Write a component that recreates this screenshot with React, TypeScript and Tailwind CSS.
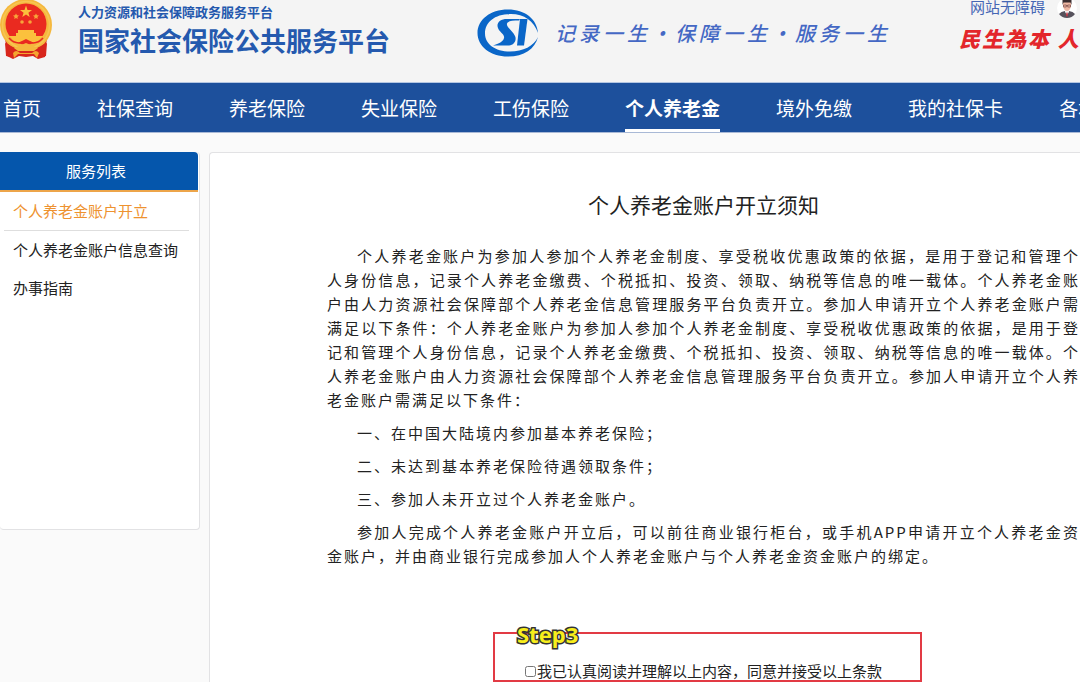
import { useState } from "react"

const navItems = ["首页", "社保查询", "养老保险", "失业保险", "工伤保险", "个人养老金", "境外免缴", "我的社保卡", "各地"]

const services = ["个人养老金账户开立", "个人养老金账户信息查询", "办事指南"]

const notice =
    "个人养老金账户为参加人参加个人养老金制度、享受税收优惠政策的依据，是用于登记和管理个人身份信息，记录个人养老金缴费、个税抵扣、投资、领取、纳税等信息的唯一载体。个人养老金账户由人力资源社会保障部个人养老金信息管理服务平台负责开立。参加人申请开立个人养老金账户需满足以下条件："

const paragraphs = [
    notice + notice,
    "一、在中国大陆境内参加基本养老保险；",
    "二、未达到基本养老保险待遇领取条件；",
    "三、参加人未开立过个人养老金账户。",
    "参加人完成个人养老金账户开立后，可以前往商业银行柜台，或手机APP申请开立个人养老金资金账户，并由商业银行完成参加人个人养老金账户与个人养老金资金账户的绑定。",
]

function Emblem() {
    return (
        <svg viewBox="0 0 52 60" className="h-[60px] w-[52px] shrink-0" aria-hidden="true">
            <path d="M5 37 L47 37 L45 57 L38 59 L33 56 L26 57 L19 56 L13 59 L7 56 Z" fill="#d8261c" />
            <circle cx="26" cy="25" r="26" fill="#f5b83d" />
            <circle cx="26" cy="25" r="23.5" fill="none" stroke="#f7c553" strokeWidth="1.5" />
            <circle cx="26" cy="24" r="20.5" fill="#ea2a20" />
            <path d="M26 5.5 L27.5 10 L32 10 L28.4 12.8 L29.7 17 L26 14.5 L22.3 17 L23.6 12.8 L20 10 L24.5 10 Z" fill="#fbc13d" />
            <g fill="#f8a43a">
                <path d="M16 13.5 L17 15.3 L19 15.6 L17.4 17 L17.8 19 L16 18 L14.2 19 L14.6 17 L13 15.6 L15 15.3 Z" />
                <path d="M36 13.5 L37 15.3 L39 15.6 L37.4 17 L37.8 19 L36 18 L34.2 19 L34.6 17 L33 15.6 L35 15.3 Z" />
                <circle cx="22" cy="22" r="1.8" />
                <circle cx="30" cy="22" r="1.8" />
            </g>
            <path d="M18 30 H34 V33 H36 V36 H43 Q38 42 34 43 L26 39 L18 43 Q14 42 9 36 H16 V33 H18 Z" fill="#fbc13d" />
            <path d="M9 38 Q16 46 26 41 Q36 46 43 38" fill="none" stroke="#ea2a20" strokeWidth="1.5" />
            <path d="M5 43 L15 48 L11 57 L6 56 Z M47 43 L37 48 L41 57 L46 56 Z" fill="#d8261c" />
            <path d="M14 48 L26 43 L38 48 L34 51 L18 51 Z" fill="#f5b83d" />
            <path d="M13 53 Q16 49 20 53 L32 53 Q36 49 39 53 L37 58 L34 54 H18 L14 58 Z" fill="#f5a52f" />
        </svg>
    )
}

function SiLogo() {
    return (
        <svg viewBox="0 0 62 48" className="h-12 w-[62px] shrink-0" aria-hidden="true">
            <path
                fillRule="evenodd"
                fill="#0a66c8"
                d="M31 0.5 C48 0.5 60 10 61 24 C57 12 47 5 34 5 C18 5 8 13 8 24.500 C8 35 18 42.500 33 42.500 C46 42.500 57 37 61 28 C58 40 47 47.500 31 47.500 C13 47.500 0.500 37 0.500 24 C0.500 11 13 0.500 31 0.500 Z"
            />
            <path
                fill="#0a66c8"
                d="M43 10 L30 10 C23 10 19 14 21 19 C22 23 28 25 27 29 C26 33 22 34.500 16 36.500 L32 36.500 C37 36 40 31 38 27 C36 22 29 18 30 14.500 C31 12 35 11.500 42 11.500 Z"
            />
            <path fill="#0a66c8" d="M43 10 L50.500 10 L47 36.500 L40 36.500 Z" />
        </svg>
    )
}

function Avatar() {
    return (
        <svg viewBox="0 0 20 20" className="h-5 w-5 shrink-0" aria-hidden="true">
            <circle cx="10" cy="8" r="10" fill="#fff" />
            <path d="M2 14 Q4 11.500 8 11 L12 11 Q16 11.500 18 14 Q15 18 10 18 Q5 18 2 14 Z" fill="#56525c" />
            <path d="M8 10 H12 L12 12 L10 15 L8 12 Z" fill="#f2f2f4" />
            <path d="M6 1 H14 V6 Q13 11 10 11 Q7 11 6 6 Z" fill="#eeb7a3" />
            <path d="M5.500 5 V0 H14.500 V5 L13.500 2.500 H6.500 Z" fill="#3a2d30" />
            <path d="M6.500 5 H9.300 V7 H6.500 Z M10.700 5 H13.500 V7 H10.700 Z M9.300 5.500 H10.700" fill="none" stroke="#7a4a48" strokeWidth="0.700" />
            <path d="M9.500 12.500 H10.500 L11 15 L10 17 L9 15 Z" fill="#c23a45" />
        </svg>
    )
}

function Header() {
    return (
        <header className="flex h-[83px] overflow-hidden border-b border-[#b4c6e2] bg-[#f4f4f4] whitespace-nowrap">
            <Emblem />
            <div className="ml-[26px] shrink-0 font-bold text-[#2459ae]">
                <p className="pt-1 text-[13px] leading-4">人力资源和社会保障政务服务平台</p>
                <h1 className="text-[26px] leading-10">国家社会保险公共服务平台</h1>
            </div>
            <div className="ml-[87px] flex shrink-0 items-center self-start pt-[9px]">
                <SiLogo />
                <p className="ml-4 text-[20px] leading-[48px] font-medium tracking-[4px] text-[#4468c4] italic">
                    记录一生・保障一生・服务一生
                </p>
            </div>
            <div className="ml-auto w-[121px] shrink-0">
                <div className="flex gap-3 pl-[11px]">
                    <a href="#accessible" className="text-[15px] leading-[14px] text-[#4667b4]">网站无障碍</a>
                    <Avatar />
                </div>
                <p className="pt-1 text-[21px] leading-7 font-black tracking-[2px] text-[#e3262b] italic">民生為本 人才</p>
            </div>
        </header>
    )
}

function NavBar() {
    return (
        <nav className="flex h-[50px] gap-14 overflow-hidden border-b border-[#a9b9d6] bg-[#1d509c] pl-[3px] text-[19px] leading-[50px] whitespace-nowrap text-white">
            {
                navItems.map(item => (
                    <a
                        key={item}
                        href="#nav"
                        className={item === "个人养老金" ? "shrink-0 border-b-[3px] border-white font-bold" : "shrink-0"}
                    >
                        {item}
                    </a>
                ))
            }
        </nav>
    )
}

function Sidebar() {
    const [active, setActive] = useState(services[0])

    return (
        <aside className="h-[378px] w-[200px] shrink-0 rounded-sm border-r border-b border-[#e2e2e4] bg-white text-[15px]">
            <h2 className="mr-px rounded-tr-sm border-b-2 border-[#eda54a] bg-[#0556ac] pr-[6px] text-center leading-[38px] text-white">服务列表</h2>
            <ul className="mr-[10px] ml-1">
                {
                    services.map(service => (
                        <li key={service} className={service === active ? "border-b border-[#dedede]" : ""}>
                            <button
                                type="button"
                                onClick={() => setActive(service)}
                                className={service === active
                                    ? "block w-full cursor-pointer pl-[9px] text-left leading-[38px] text-[#ee922f]"
                                    : "block w-full cursor-pointer pl-[9px] text-left leading-[38px] text-[#222]"}
                            >
                                {service}
                            </button>
                        </li>
                    ))
                }
            </ul>
        </aside>
    )
}

export default function App() {
    const [agreed, setAgreed] = useState(false)

    return (
        <div className="flex min-h-screen flex-col overflow-hidden bg-[#fafafa] font-['Noto_Sans_CJK_SC',sans-serif]">
            <Header />
            <NavBar />
            <div className="flex flex-1 gap-[9px] pt-[19px]">
                <Sidebar />
                <main className="min-w-0 flex-1 rounded-tl-sm border-t border-l border-[#e2e2e4] bg-white pl-[117px] text-[15px] text-[#222]">
                    <h2 className="pt-[35px] text-center text-[21px] leading-8">个人养老金账户开立须知</h2>
                    <div className="space-y-[9px] pt-6 text-justify leading-6 tracking-[2px]">
                        {
                            paragraphs.map(text => <p key={text} className="indent-[30px]">{text}</p>)
                        }
                    </div>
                    <div className="relative mt-16 ml-[166px] h-[50px] w-[429px] border-2 border-[#e23a44] pt-[26px] pl-[30px]">
                        <span className="absolute -top-[14px] left-[22px] font-['Noto_Sans',sans-serif] text-[22px] leading-7 font-bold text-[#f7ee1c] [paint-order:stroke] [-webkit-text-stroke:3px_#333]">
                            Step3
                        </span>
                        <label className="flex items-center leading-[22px] whitespace-nowrap">
                            <input
                                type="checkbox"
                                checked={agreed}
                                onChange={e => setAgreed(e.target.checked)}
                                className="mr-px h-[11px] w-[11px] shrink-0"
                            />
                            我已认真阅读并理解以上内容，同意并接受以上条款
                        </label>
                    </div>
                </main>
            </div>
        </div>
    )
}
